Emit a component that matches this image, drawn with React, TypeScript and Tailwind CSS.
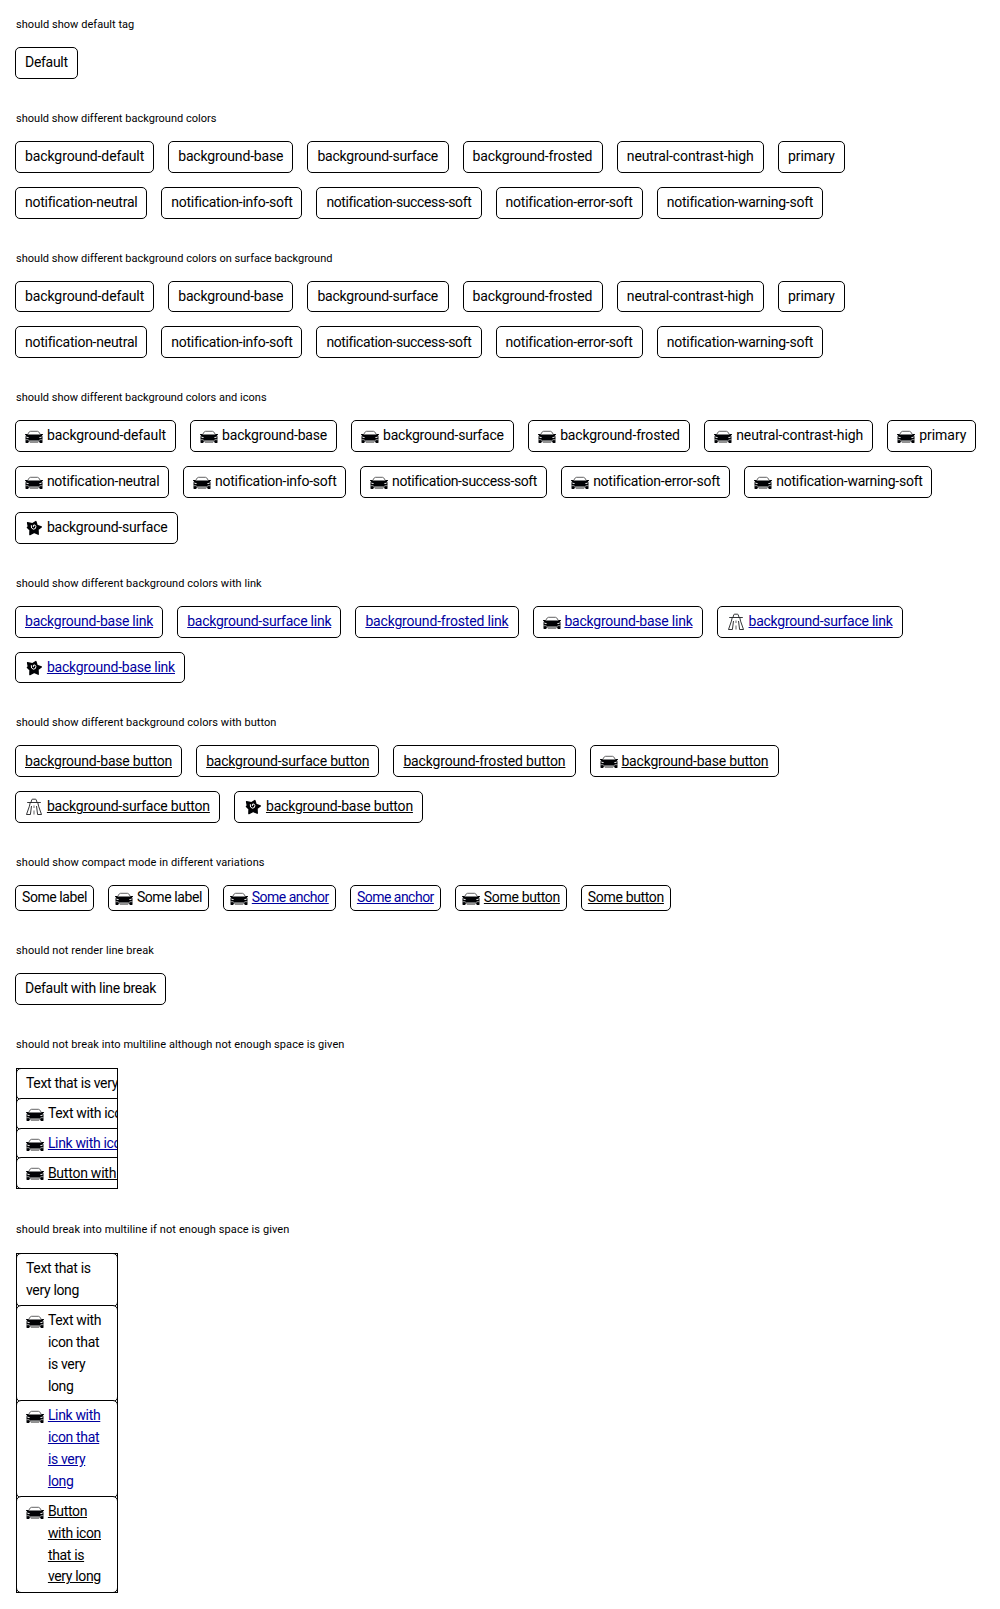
import type { ReactNode } from "react";

type IconName = "car" | "highway" | "star";
type Kind = "text" | "link" | "button";

/* Width and letter spacing of every label. */
const labels: Record<string, string> = {
  "Default": "w-[42.7px] tracking-[-0.3px]",
  "background-default": "w-[119.2px] tracking-[-0.1px]",
  "background-base": "w-[105.2px] tracking-[-0.16px]",
  "background-surface": "w-[121.2px] tracking-[-0.21px]",
  "background-frosted": "w-[120.2px] tracking-[-0.13px]",
  "neutral-contrast-high": "w-[127.2px] tracking-[-0.09px]",
  "primary": "w-[47px] tracking-[-0.06px]",
  "notification-neutral": "w-[112.2px] tracking-[-0.25px]",
  "notification-info-soft": "w-[121.2px] tracking-[-0.25px]",
  "notification-success-soft": "w-[145.2px] tracking-[-0.38px]",
  "notification-error-soft": "w-[127.2px] tracking-[-0.24px]",
  "notification-warning-soft": "w-[146px] tracking-[-0.25px]",
  "background-base link": "w-[128.2px] tracking-[-0.23px]",
  "background-surface link": "w-[144.2px] tracking-[-0.24px]",
  "background-frosted link": "w-[143.2px] tracking-[-0.18px]",
  "background-base button": "w-[147.2px] tracking-[-0.2px]",
  "background-surface button": "w-[163.2px] tracking-[-0.21px]",
  "background-frosted button": "w-[162.2px] tracking-[-0.15px]",
  "Some label": "w-[65px] tracking-[-0.42px]",
  "Some anchor": "w-[77.1px] tracking-[-0.51px]",
  "Some button": "w-[76px] tracking-[-0.34px]",
  "Default with line break": "w-[131px] tracking-[-0.3px]",
};

function Icon({ name }: { name: IconName }) {
  return (
    <svg viewBox="0 0 18 22" className="mr-[3.9px] h-[22px] w-[18px] shrink-0" fill="none" stroke="none">
      {name === "car" && (
        <>
          <path d="M2.8 9.2 4.2 7Q4.7 6.3 5.5 6.3H12.5Q13.3 6.3 13.8 7L15.2 9.2" stroke="#3c3c3e" strokeWidth="0.8" />
          <path d="M.1 9.1H2.2L3 9.5H15L15.8 9.1H17.9V10L16.8 10.4 17.5 11.5V17.6Q17.5 18 17 18H14.8L14.2 16.4H3.8L3.2 18H1Q.5 18 .5 17.6V11.5L1.2 10.4.1 10Z" fill="#010205" />
          <path d="M1.2 11.6 3.6 12.2 3.8 13 1.6 12.8ZM16.8 11.6 14.4 12.2 14.2 13 16.4 12.8Z" fill="#fff" />
          <path d="M.5 14.7H3L4.2 15.8H13.8L15 14.7H17.5" stroke="#fff" strokeWidth="0.6" />
          <path d="M4.8 17.4H13.2" stroke="#8a8a8a" strokeWidth="1.1" />
        </>
      )}
      {name === "highway" && (
        <g stroke="#010205" strokeWidth="0.8">
          <path d="M2.2 6.5H15.8M6 6.3 6.8 3.7Q7 3.2 7.6 3.2H10.4Q11 3.2 11.2 3.7L12 6.3" />
          <path d="M5.2 6.7 4.4 10.2 1.5 18.5H5.4L6.5 10M12.8 6.7 13.6 10.2 16.5 18.5H12.6L11.5 10" />
          <path d="M9 9.5V12M9 14.5V18.5" strokeWidth="0.6" />
        </g>
      )}
      {name === "star" && (
        <>
          <path
            d="M10.9 4.6 12.1 8.5 16.3 10 13 12.4 13.2 17.2 9.2 15.4 4.9 17.6 5 12.9 2.4 10.6 3.3 9.4 2.6 5.8 7.2 6.8Z"
            fill="#010205"
            stroke="#010205"
            strokeWidth="1.4"
            strokeLinejoin="round"
          />
          <path d="M6.3 8.2Q5.8 11.8 8.3 12.2 11 12.2 10.9 9.6 10.3 7.4 8.7 8 7.6 9 8.6 10.1" stroke="#fff" strokeWidth="1" />
        </>
      )}
    </svg>
  );
}

function Tag({
  icon,
  kind = "text",
  compact = false,
  size,
  children,
}: {
  icon?: IconName;
  kind?: Kind;
  compact?: boolean;
  size?: string;
  children: ReactNode;
}) {
  const sizing = size ?? (typeof children === "string" ? labels[children] + " whitespace-nowrap" : "");
  const text = `block text-left pt-[0.2px] -mb-[0.2px] ${sizing}`;
  const padding = compact ? "px-1.5 py-px" : "px-[9px] py-1";
  return (
    <span className={`flex shrink-0 items-start rounded bg-white outline outline-black ${padding}`}>
      {icon && (
        <span className="flex h-[21.85px] shrink-0">
          <Icon name={icon} />
        </span>
      )}
      {kind === "link" ? (
        <a href="#" className={`text-[#00009f] underline ${text}`}>{children}</a>
      ) : kind === "button" ? (
        <button type="button" className={`underline ${text}`}>{children}</button>
      ) : (
        <span className={text}>{children}</span>
      )}
    </span>
  );
}

function Section({ title, spacing, children }: { title: string; spacing: string; children: ReactNode }) {
  return (
    <section className="p-4">
      <h2 className={`mb-[15px] h-[17px] whitespace-nowrap pt-px text-[11px] leading-4 ${spacing}`}>{title}</h2>
      {children}
    </section>
  );
}

function Row({ children }: { children: ReactNode }) {
  return <div className="flex flex-wrap gap-4">{children}</div>;
}

const colors = [
  "background-default",
  "background-base",
  "background-surface",
  "background-frosted",
  "neutral-contrast-high",
  "primary",
  "notification-neutral",
  "notification-info-soft",
  "notification-success-soft",
  "notification-error-soft",
  "notification-warning-soft",
];

export default function App() {
  return (
    <main className="w-[1000px] overflow-hidden bg-white font-['Roboto',sans-serif] text-[14px] leading-[21.85px] text-black">
      <Section title="should show default tag" spacing="tracking-[0.04px]">
        <Row>
          <Tag>Default</Tag>
        </Row>
      </Section>

      <Section title="should show different background colors" spacing="tracking-[0.02px]">
        <Row>
          {colors.map((c) => (
            <Tag key={c}>{c}</Tag>
          ))}
        </Row>
      </Section>

      <Section title="should show different background colors on surface background" spacing="tracking-[0.025px]">
        <Row>
          {colors.map((c) => (
            <Tag key={c}>{c}</Tag>
          ))}
        </Row>
      </Section>

      <Section title="should show different background colors and icons" spacing="tracking-[0.015px]">
        <Row>
          {colors.map((c) => (
            <Tag key={c} icon="car">{c}</Tag>
          ))}
          <Tag icon="star">background-surface</Tag>
        </Row>
      </Section>

      <Section title="should show different background colors with link" spacing="tracking-[0.06px]">
        <Row>
          <Tag kind="link">background-base link</Tag>
          <Tag kind="link">background-surface link</Tag>
          <Tag kind="link">background-frosted link</Tag>
          <Tag kind="link" icon="car">background-base link</Tag>
          <Tag kind="link" icon="highway">background-surface link</Tag>
          <Tag kind="link" icon="star">background-base link</Tag>
        </Row>
      </Section>

      <Section title="should show different background colors with button" spacing="tracking-[0.06px]">
        <Row>
          <Tag kind="button">background-base button</Tag>
          <Tag kind="button">background-surface button</Tag>
          <Tag kind="button">background-frosted button</Tag>
          <Tag kind="button" icon="car">background-base button</Tag>
          <Tag kind="button" icon="highway">background-surface button</Tag>
          <Tag kind="button" icon="star">background-base button</Tag>
        </Row>
      </Section>

      <Section title="should show compact mode in different variations" spacing="tracking-[0.08px]">
        <Row>
          <Tag compact>Some label</Tag>
          <Tag compact icon="car">Some label</Tag>
          <Tag compact icon="car" kind="link">Some anchor</Tag>
          <Tag compact kind="link">Some anchor</Tag>
          <Tag compact icon="car" kind="button">Some button</Tag>
          <Tag compact kind="button">Some button</Tag>
        </Row>
      </Section>

      <Section title="should not render line break" spacing="tracking-[0.085px]">
        <Row>
          <Tag>Default with line break</Tag>
        </Row>
      </Section>

      <Section
        title="should not break into multiline although not enough space is given"
        spacing="tracking-[0.085px]"
      >
        <div className="flex w-[102px] flex-col items-start overflow-hidden border border-black">
          <Tag size="whitespace-nowrap tracking-[-0.34px]">Text that is very long</Tag>
          <Tag icon="car" size="whitespace-nowrap tracking-[-0.34px]">Text with icon that is very long</Tag>
          <Tag icon="car" kind="link" size="whitespace-nowrap tracking-[-0.34px]">Link with icon that is very long</Tag>
          <Tag icon="car" kind="button" size="whitespace-nowrap tracking-[-0.24px]">Button with icon that is very long</Tag>
        </div>
      </Section>

      <Section title="should break into multiline if not enough space is given" spacing="tracking-[0.1px]">
        <div className="flex w-[102px] flex-col overflow-hidden border border-black">
          <Tag size="w-[82px] tracking-[-0.34px]">
            Text that is<br />very long
          </Tag>
          <Tag icon="car" size="w-[60px] tracking-[-0.34px]">
            Text with<br />icon that<br />is very<br />long
          </Tag>
          <Tag icon="car" kind="link" size="w-[60px] tracking-[-0.34px]">
            Link with<br />icon that<br />is very<br />long
          </Tag>
          <Tag icon="car" kind="button" size="w-[60px] tracking-[-0.34px]">
            Button<br />with icon<br />that is<br />very long
          </Tag>
        </div>
      </Section>
    </main>
  );
}
